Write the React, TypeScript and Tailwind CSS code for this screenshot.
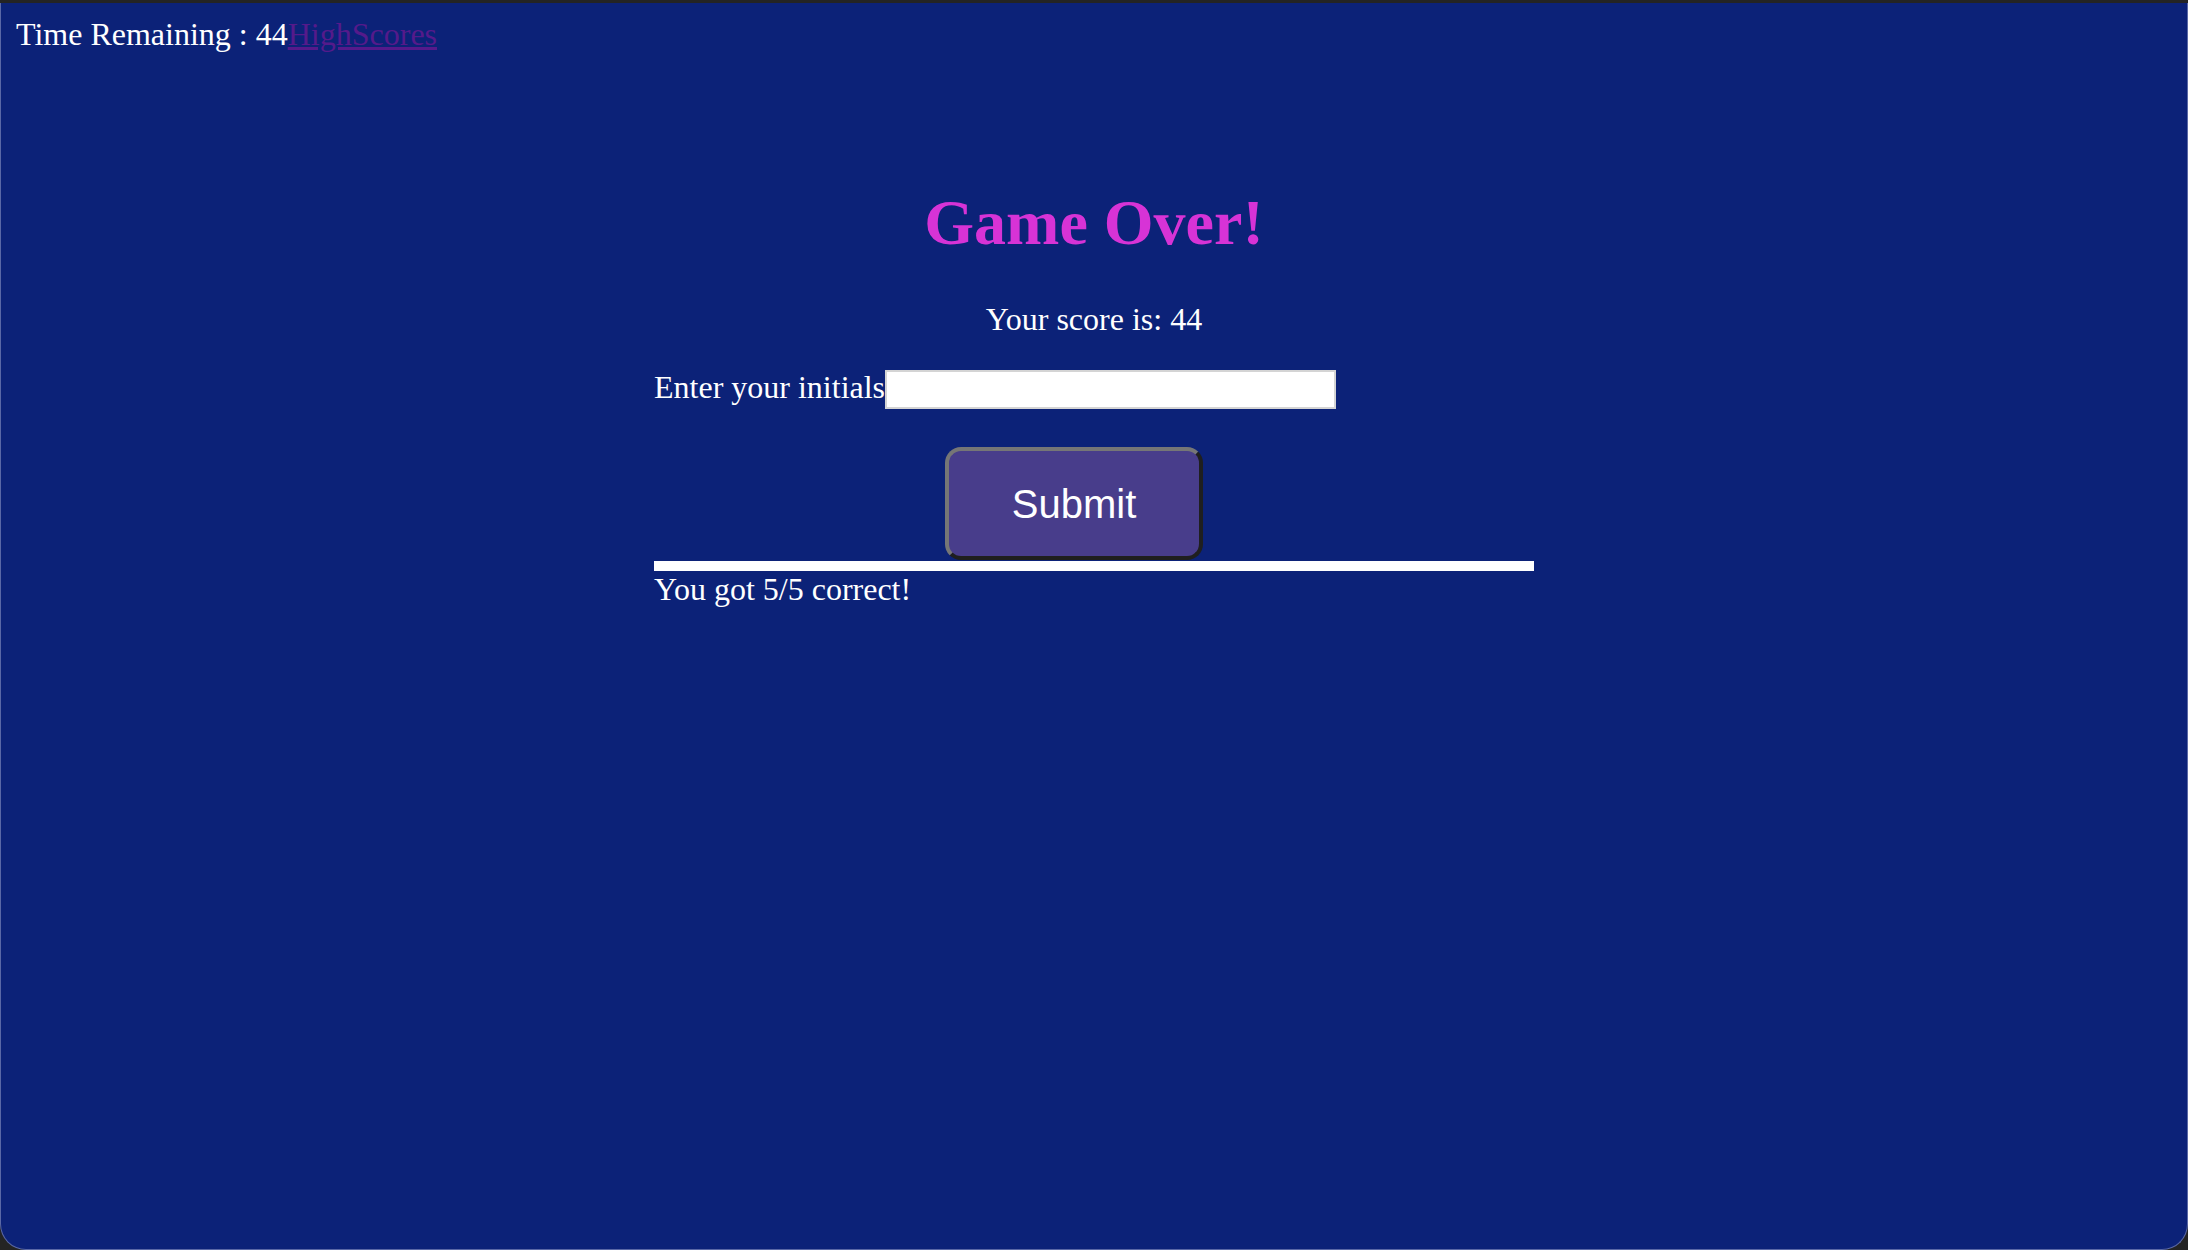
import React from 'react'

const App = () => {
  return (
    <div className="h-[1250px] w-full overflow-hidden bg-[#242424] pt-[3px]">
      <div className="h-[1247px] rounded-b-[26px] border-x border-b border-[#5a68a6] bg-[#0c2278] font-['Liberation_Serif',serif] text-white">
        {/* top bar */}
        <div className="pl-[15px] pt-[13px] text-[32px] leading-[37px]">
          Time Remaining : 44<a href="#" className="text-[#551a8b] underline">HighScores</a>
        </div>

        <div className="mx-auto w-[880px]">
          <h1 className="mt-[133px] text-center text-[64px] font-bold leading-[74px] text-[#d733d6]">Game Over!</h1>
          <p className="mt-[41px] text-center text-[32px] leading-[37px]">Your score is: 44</p>

          <div className="mt-[31px] flex items-start">
            <label className="whitespace-nowrap text-[32px] leading-[37px]">Enter your initials</label>
            <input type="text" className="mt-[1px] h-[39px] w-[451px] border-2 border-[#d4d4d4] bg-white outline-none" />
          </div>

          <button className="ml-[291px] mt-[38px] block h-[113px] w-[258px] rounded-[16px] border-4 border-solid border-t-[#767676] border-l-[#767676] border-b-[#1f1f1f] border-r-[#1f1f1f] bg-[#483d8b] font-['Liberation_Sans',Arial,sans-serif] text-[40px] text-white">
            Submit
          </button>

          <div className="mt-[1px] h-[10px] bg-white" />
          <p className="mt-[2px] whitespace-nowrap text-[32px] leading-[32px]">You got 5/5 correct!</p>
        </div>
      </div>
    </div>
  )
}

export default App
